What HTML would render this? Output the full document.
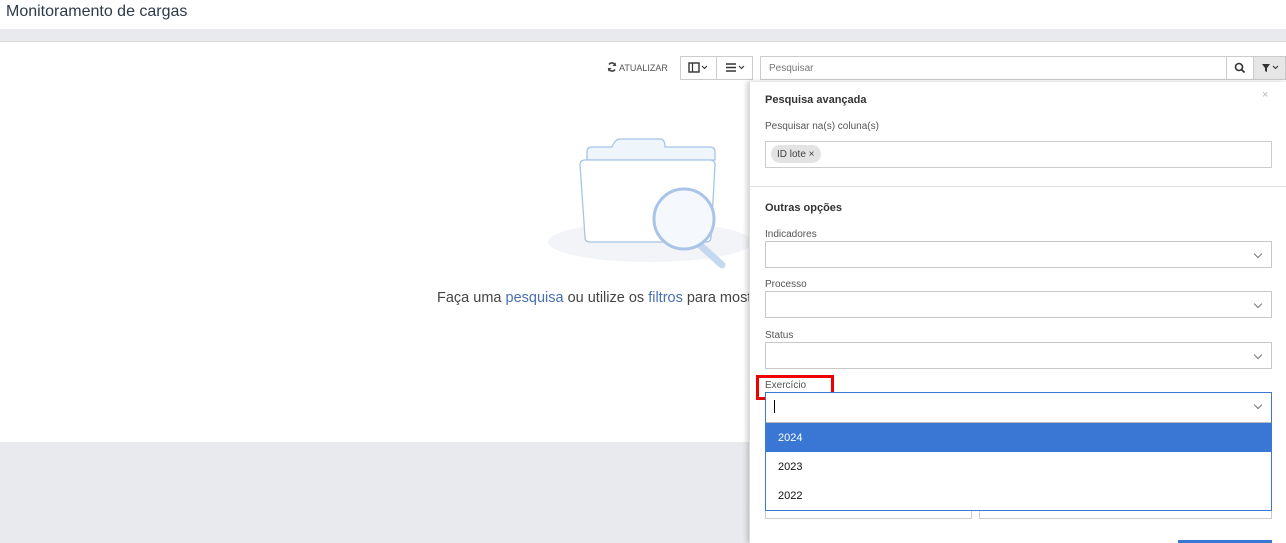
<!DOCTYPE html><html><head><style>
*{box-sizing:border-box;margin:0;padding:0}
body{width:1286px;height:543px;overflow:hidden;font-family:"Liberation Sans",sans-serif;background:#e9eaee;position:relative;color:#333}
.a{position:absolute}
.lbl{position:absolute;left:765px;font-size:10px;color:#555}
.sel{position:absolute;left:765px;width:507px;height:27px;border:1px solid #c8c8c8;background:#fff}
.sel:after{content:"";position:absolute;right:10px;top:9px;width:5px;height:5px;border-right:1px solid #777;border-bottom:1px solid #777;transform:rotate(45deg)}
</style></head><body>
<div class="a" style="left:0;top:0;width:1286px;height:29px;background:#fff"></div>
<div class="a" style="left:6px;top:3px;font-size:16px;color:#2d3a4a">Monitoramento de cargas</div>
<div class="a" style="left:0;top:41px;width:1286px;height:401px;background:#fff;border-top:1px solid #dcdcdc"></div>
<svg class="a" style="left:607px;top:62px" width="10" height="10" viewBox="0 0 10 10"><path d="M8.5 4A3.6 3.6 0 0 0 2 2.5M1.5 6A3.6 3.6 0 0 0 8 7.5" fill="none" stroke="#444" stroke-width="1.6"/><path d="M8.8 0.5v3.5H5.3zM1.2 9.5V6h3.5z" fill="#444"/></svg>
<div class="a" style="left:619px;top:63px;font-size:9px;color:#555">ATUALIZAR</div>
<div class="a" style="left:680px;top:56px;width:37px;height:24px;border:1px solid #ccc;background:#fff"></div>
<svg class="a" style="left:688px;top:62px" width="24" height="12"><rect x="1" y="1" width="10" height="9" fill="none" stroke="#333" stroke-width="1.4"/><line x1="4.5" y1="1" x2="4.5" y2="10" stroke="#333" stroke-width="1.2"/><path d="M14 4l2.5 2.5L19 4" fill="none" stroke="#333" stroke-width="1.1"/></svg>
<div class="a" style="left:716px;top:56px;width:37px;height:24px;border:1px solid #ccc;background:#fff"></div>
<svg class="a" style="left:725px;top:62px" width="24" height="12"><path d="M1 2h10M1 5.5h10M1 9h10" stroke="#333" stroke-width="1.5"/><path d="M14 4l2.5 2.5L19 4" fill="none" stroke="#333" stroke-width="1.1"/></svg>
<div class="a" style="left:760px;top:56px;width:467px;height:24px;border:1px solid #ccc;background:#fff;font-size:10px;color:#777;padding:6px 0 0 8px">Pesquisar</div>
<div class="a" style="left:1226px;top:56px;width:28px;height:24px;border:1px solid #ccc;background:#fff"></div>
<svg class="a" style="left:1234px;top:62px" width="12" height="12"><circle cx="5" cy="5" r="3.5" fill="none" stroke="#333" stroke-width="1.6"/><line x1="7.5" y1="7.5" x2="10.5" y2="10.5" stroke="#333" stroke-width="1.8"/></svg>
<div class="a" style="left:1253px;top:56px;width:33px;height:24px;border:1px solid #ccc;background:#e6e6e6"></div>
<svg class="a" style="left:1261px;top:62px" width="22" height="12"><path d="M1 2h8L6 6v4L4 9V6z" fill="#333"/><path d="M12 4l2.5 2.5L17 4" fill="none" stroke="#333" stroke-width="1.1"/></svg>
<svg class="a" style="left:545px;top:130px" width="210" height="140">
<ellipse cx="105" cy="112" rx="102" ry="20" fill="#f2f4f8"/>
<path d="M42 22 q0-5 5-5 h20 q3-8 8-8 h40 q5 0 5 8 h45 q5 0 5 5 v8 H42z" fill="#eef6fc" stroke="#a6c4e8" stroke-width="1.3"/>
<path d="M40 30 h125 q5 0 5 5 l-4 72 q0 5-5 5 H45 q-5 0-5-5 L35 35 q0-5 5-5z" fill="#fff" stroke="#a6c4e8" stroke-width="1.3"/>
<line x1="155" y1="115" x2="177" y2="135" stroke="#c4d8ef" stroke-width="7" stroke-linecap="round"/>
<circle cx="139" cy="89" r="30" fill="#f5f9fd" stroke="#a9c4e8" stroke-width="3"/>
</svg>
<div class="a" style="left:437px;top:290px;font-size:14.5px;color:#444">Faça uma <span style="color:#4a6fb5">pesquisa</span> ou utilize os <span style="color:#4a6fb5">filtros</span> para mostrar</div>
<div class="a" style="left:749px;top:82px;width:537px;height:461px;background:#fff;box-shadow:-2px 0 5px rgba(0,0,0,.2);border-left:1px solid #ddd"></div>
<div class="a" style="left:765px;top:94px;font-size:11px;font-weight:bold;color:#333">Pesquisa avançada</div>
<div class="a" style="left:1262px;top:89px;font-size:11px;color:#bbb">×</div>
<div class="lbl" style="top:121px">Pesquisar na(s) coluna(s)</div>
<div class="a" style="left:765px;top:141px;width:507px;height:27px;border:1px solid #ccc"></div>
<div class="a" style="left:771px;top:145px;height:18px;padding:4px 6px;border-radius:9px;background:#e3e3e3;font-size:10px;color:#444">ID lote ×</div>
<div class="a" style="left:749px;top:186px;width:537px;height:1px;background:#ddd"></div>
<div class="a" style="left:765px;top:202px;font-size:11px;font-weight:bold">Outras opções</div>
<div class="lbl" style="top:229px">Indicadores</div><div class="sel" style="top:241px"></div>
<div class="lbl" style="top:279px">Processo</div><div class="sel" style="top:291px"></div>
<div class="lbl" style="top:330px">Status</div><div class="sel" style="top:342px"></div>
<div class="lbl" style="top:380px">Exercício</div>
<div class="a" style="left:756px;top:375px;width:78px;height:25px;border:3px solid #e00"></div>
<div class="a" style="left:765px;top:497px;width:207px;height:22px;border:1px solid #ccc"></div>
<div class="a" style="left:979px;top:497px;width:293px;height:22px;border:1px solid #ccc"></div>
<div class="a" style="left:765px;top:392px;width:507px;height:119px;border:1px solid #3a78d6;background:#fff"></div>
<div class="sel" style="top:393px;left:766px;width:505px;height:29px;border:none"></div>
<div class="a" style="left:774px;top:400px;width:1px;height:13px;background:#000"></div>
<div class="a" style="left:766px;top:422px;width:505px;height:1px;background:#bbb"></div>
<div class="a" style="left:766px;top:423px;width:505px;height:29px;background:#3a77d5;color:#fff;font-size:11px;padding:9px 0 0 12px">2024</div>
<div class="a" style="left:778px;top:461px;font-size:11px;color:#111">2023</div>
<div class="a" style="left:778px;top:490px;font-size:11px;color:#111">2022</div>
<div class="a" style="left:1178px;top:540px;width:94px;height:3px;background:#3a77d5"></div>
</body></html>
